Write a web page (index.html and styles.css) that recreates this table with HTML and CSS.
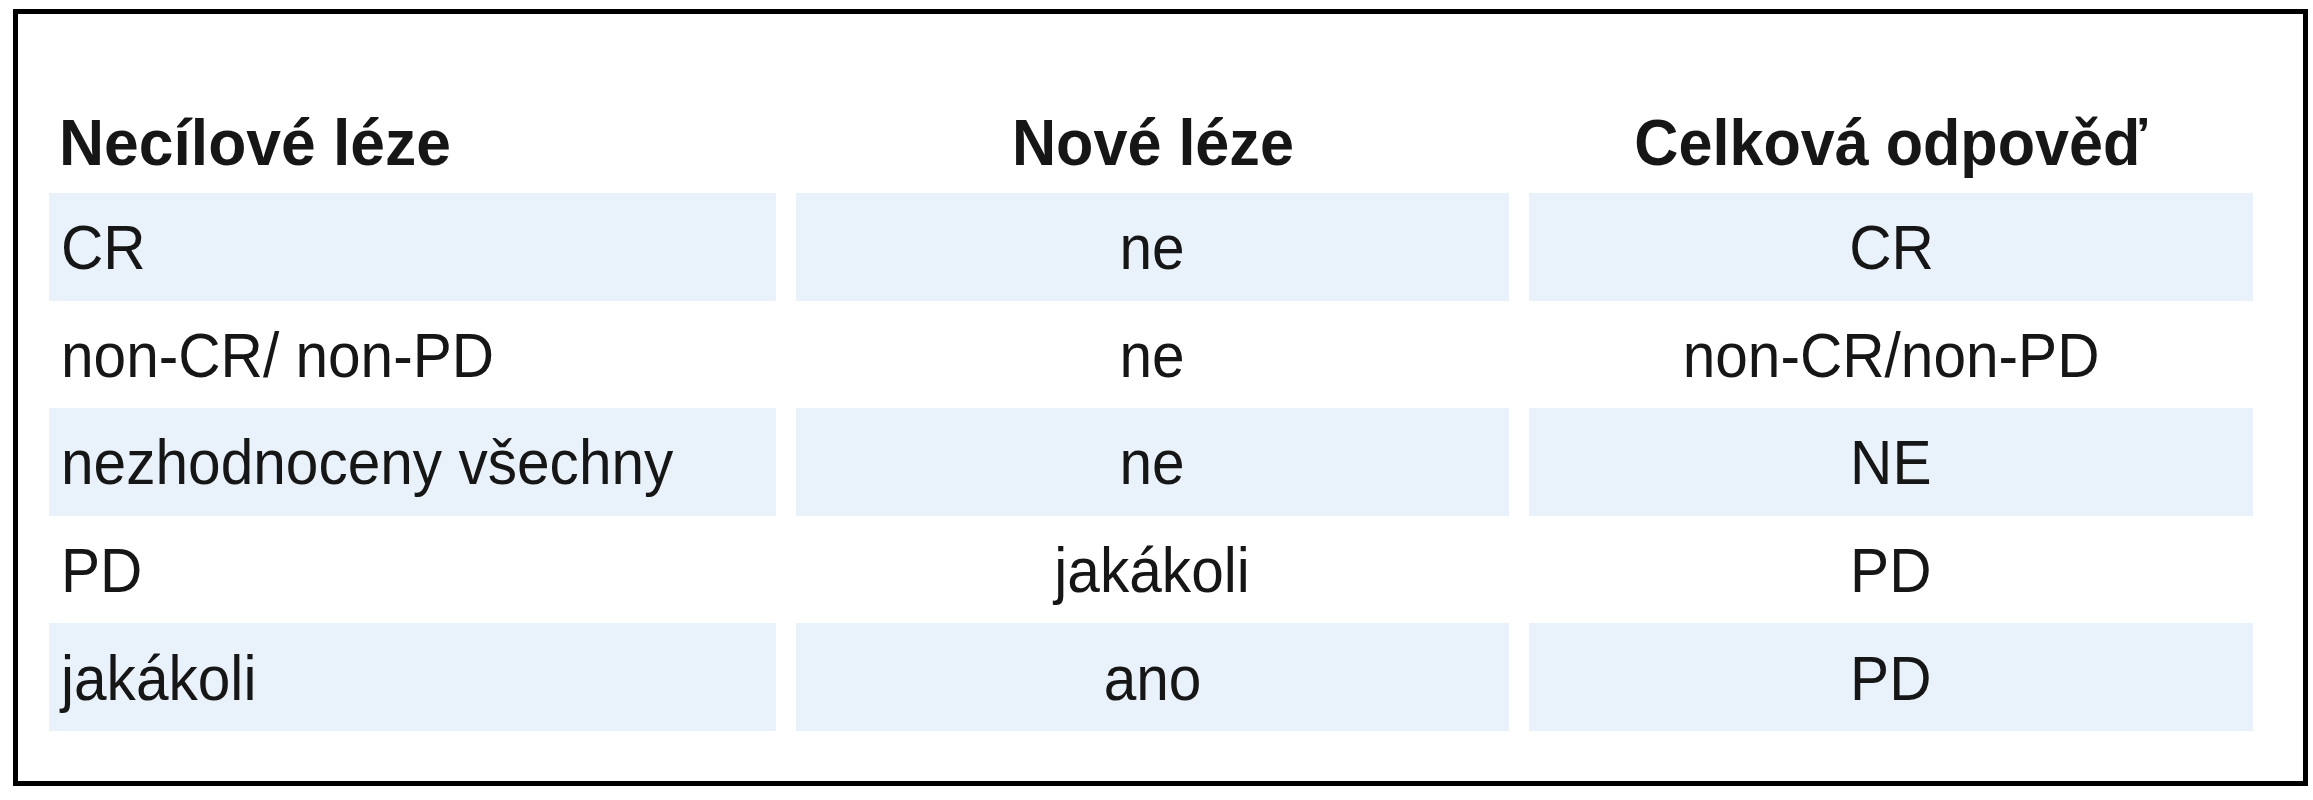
FILE: index.html
```html
<!DOCTYPE html>
<html lang="cs">
<head>
<meta charset="utf-8">
<title>Celková odpověď</title>
<link rel="stylesheet" href="styles.css">
</head>
<body>
<div class="frame">
  <div class="grid">
    <div class="head left"><span class="t">Necílové léze</span></div>
    <div class="head center"><span class="t">Nové léze</span></div>
    <div class="head center"><span class="t">Celková odpověď</span></div>

    <div class="cell left shade"><span class="t">CR</span></div>
    <div class="cell center shade"><span class="t">ne</span></div>
    <div class="cell center shade"><span class="t">CR</span></div>

    <div class="cell left"><span class="t">non-CR/ non-PD</span></div>
    <div class="cell center"><span class="t">ne</span></div>
    <div class="cell center"><span class="t">non-CR/non-PD</span></div>

    <div class="cell left shade"><span class="t">nezhodnoceny všechny</span></div>
    <div class="cell center shade"><span class="t">ne</span></div>
    <div class="cell center shade"><span class="t">NE</span></div>

    <div class="cell left"><span class="t">PD</span></div>
    <div class="cell center"><span class="t">jakákoli</span></div>
    <div class="cell center"><span class="t">PD</span></div>

    <div class="cell left shade"><span class="t">jakákoli</span></div>
    <div class="cell center shade"><span class="t">ano</span></div>
    <div class="cell center shade"><span class="t">PD</span></div>
  </div>
</div>
</body>
</html>
```

FILE: styles.css
```css
html, body {
  margin: 0;
  padding: 0;
  background: #ffffff;
}

body {
  font-family: "Liberation Sans", Arial, sans-serif;
  color: #161616;
}

.frame {
  box-sizing: border-box;
  margin: 9px 0 0 13px;
  width: 2295px;
  height: 777px;
  border: 5px solid #000000;
  padding: 0 0 0 31px;
}

.grid {
  display: grid;
  grid-template-columns: 727px 713px 724px;
  grid-template-rows: 179px repeat(5, 107.6px);
  column-gap: 20px;
}

.head {
  display: flex;
  align-items: flex-end;
  font-weight: bold;
  font-size: 65px;
  line-height: 1;
  padding-bottom: 18px;
  box-sizing: border-box;
}

.cell {
  display: flex;
  align-items: center;
  font-size: 63px;
  line-height: 1;
  padding-top: 2px;
  box-sizing: border-box;
}

.t {
  display: inline-block;
  white-space: nowrap;
}

.head .t {
  transform: scaleX(0.94);
}

.head.left .t {
  transform: scaleX(0.96);
}

.cell .t {
  transform: scaleX(0.93);
}

.left {
  justify-content: flex-start;
  padding-left: 12px;
}

.left .t {
  transform-origin: left center;
}

.center .t {
  transform-origin: center center;
}

.head.left {
  padding-left: 10px;
}

.center {
  justify-content: center;
}

.shade {
  background: #e9f1fa;
}
```
